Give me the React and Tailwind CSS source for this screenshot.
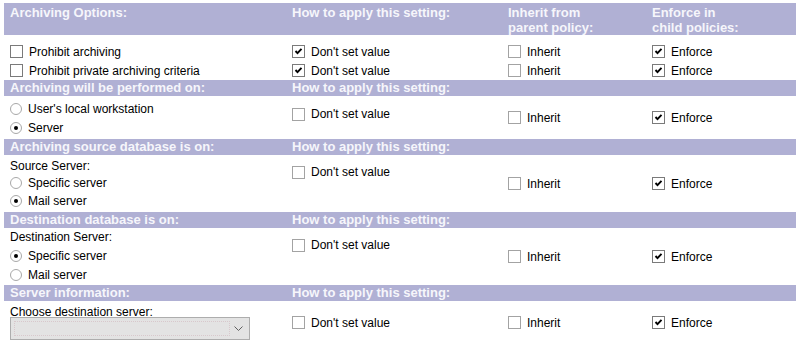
import React from 'react';

const cols = 'grid grid-cols-[282px_216px_144px_1fr] pl-[6px]';

const Check = ({ checked, light }) => (
  <span
    className={`inline-flex items-center justify-center w-[13px] h-[13px] bg-white border ${
      light ? 'border-[#a3a3a3]' : 'border-[#7a7a7a]'
    }`}
  >
    {checked && (
      <svg width="9" height="9" viewBox="0 0 9 9">
        <polyline points="1.5,4 3.5,6.2 7.5,1.8" fill="none" stroke="#000" strokeWidth="1.9" />
      </svg>
    )}
  </span>
);

const CheckRow = ({ label, checked, light, className = '' }) => (
  <div className={`flex items-center gap-[6px] h-[18px] ${className}`}>
    <Check checked={checked} light={light} />
    <span>{label}</span>
  </div>
);

const Radio = ({ label, selected, className = 'h-[18px]' }) => (
  <div className={`flex items-center gap-[6px] ${className}`}>
    <span className="inline-flex items-center justify-center w-[12px] h-[12px] rounded-full bg-white border border-[#a8a8a8]">
      {selected && <span className="w-[4px] h-[4px] rounded-full bg-black" />}
    </span>
    <span>{label}</span>
  </div>
);

const Header = ({ title }) => (
  <div className={`${cols} bg-[#b0b0d4] text-[#f6f6fb] font-bold text-[13px] h-[16px] leading-[15px]`}>
    <div>{title}</div>
    <div>How to apply this setting:</div>
    <div />
    <div />
  </div>
);

const InheritEnforce = () => (
  <>
    <CheckRow label="Inherit" light className="self-center" />
    <CheckRow label="Enforce" checked className="self-center" />
  </>
);

export default function App() {
  return (
    <div className="w-[807px] h-[344px] bg-white overflow-hidden pt-[3px] pl-[4px] text-[12px] text-black font-['Liberation_Sans',Arial,sans-serif]">
      <div className="w-[792px]">
        <div className={`${cols} bg-[#b0b0d4] text-[#f6f6fb] font-bold text-[13px] h-[32px] pt-[2px] leading-[15px]`}>
          <div>Archiving Options:</div>
          <div>How to apply this setting:</div>
          <div>
            Inherit from
            <br />
            parent policy:
          </div>
          <div>
            Enforce in
            <br />
            child policies:
          </div>
        </div>

        <div className={`${cols} pt-[7px] h-[45px]`}>
          <CheckRow label="Prohibit archiving" className="h-[19px]" />
          <CheckRow label="Don't set value" checked className="h-[19px]" />
          <CheckRow label="Inherit" light className="h-[19px]" />
          <CheckRow label="Enforce" checked className="h-[19px]" />
          <CheckRow label="Prohibit private archiving criteria" className="h-[19px]" />
          <CheckRow label="Don't set value" checked className="h-[19px]" />
          <CheckRow label="Inherit" light className="h-[19px]" />
          <CheckRow label="Enforce" checked className="h-[19px]" />
        </div>

        <Header title="Archiving will be performed on:" />
        <div className={`${cols} h-[43px]`}>
          <div className="pt-[3px]">
            <Radio label="User's local workstation" className="h-[19px]" />
            <Radio label="Server" selected className="h-[19px]" />
          </div>
          <CheckRow label="Don't set value" light className="mt-[9px]" />
          <InheritEnforce />
        </div>

        <Header title="Archiving source database is on:" />
        <div className={`${cols} h-[57px]`}>
          <div className="pt-[3px]">
            <div className="h-[16px] leading-[16px]">Source Server:</div>
            <Radio label="Specific server" />
            <Radio label="Mail server" selected />
          </div>
          <CheckRow label="Don't set value" light className="mt-[8px]" />
          <InheritEnforce />
        </div>

        <Header title="Destination database is on:" />
        <div className={`${cols} h-[57px]`}>
          <div className="pt-[1px]">
            <div className="h-[17px] leading-[16px]">Destination Server:</div>
            <Radio label="Specific server" selected className="h-[19px]" />
            <Radio label="Mail server" className="h-[19px]" />
          </div>
          <CheckRow label="Don't set value" light className="mt-[8px]" />
          <InheritEnforce />
        </div>

        <Header title="Server information:" />
        <div className={`${cols} h-[43px]`}>
          <div className="pt-[5px]">
            <div className="leading-[12px] h-[12px]">Choose destination server:</div>
            <div className="mt-[-1px] w-[240px] h-[23px] bg-[#e3e3e3] border border-[#adadad] flex items-center p-[3px] gap-[4px]">
              <div className="flex-1 h-full border border-dotted border-[#d8c8cc]" />
              <svg width="9" height="5" viewBox="0 0 9 5" className="mr-[3px]">
                <polyline points="0.5,0.5 4.5,4.5 8.5,0.5" fill="none" stroke="#606060" strokeWidth="1" />
              </svg>
            </div>
          </div>
          <CheckRow label="Don't set value" light className="self-center" />
          <InheritEnforce />
        </div>
      </div>
    </div>
  );
}
